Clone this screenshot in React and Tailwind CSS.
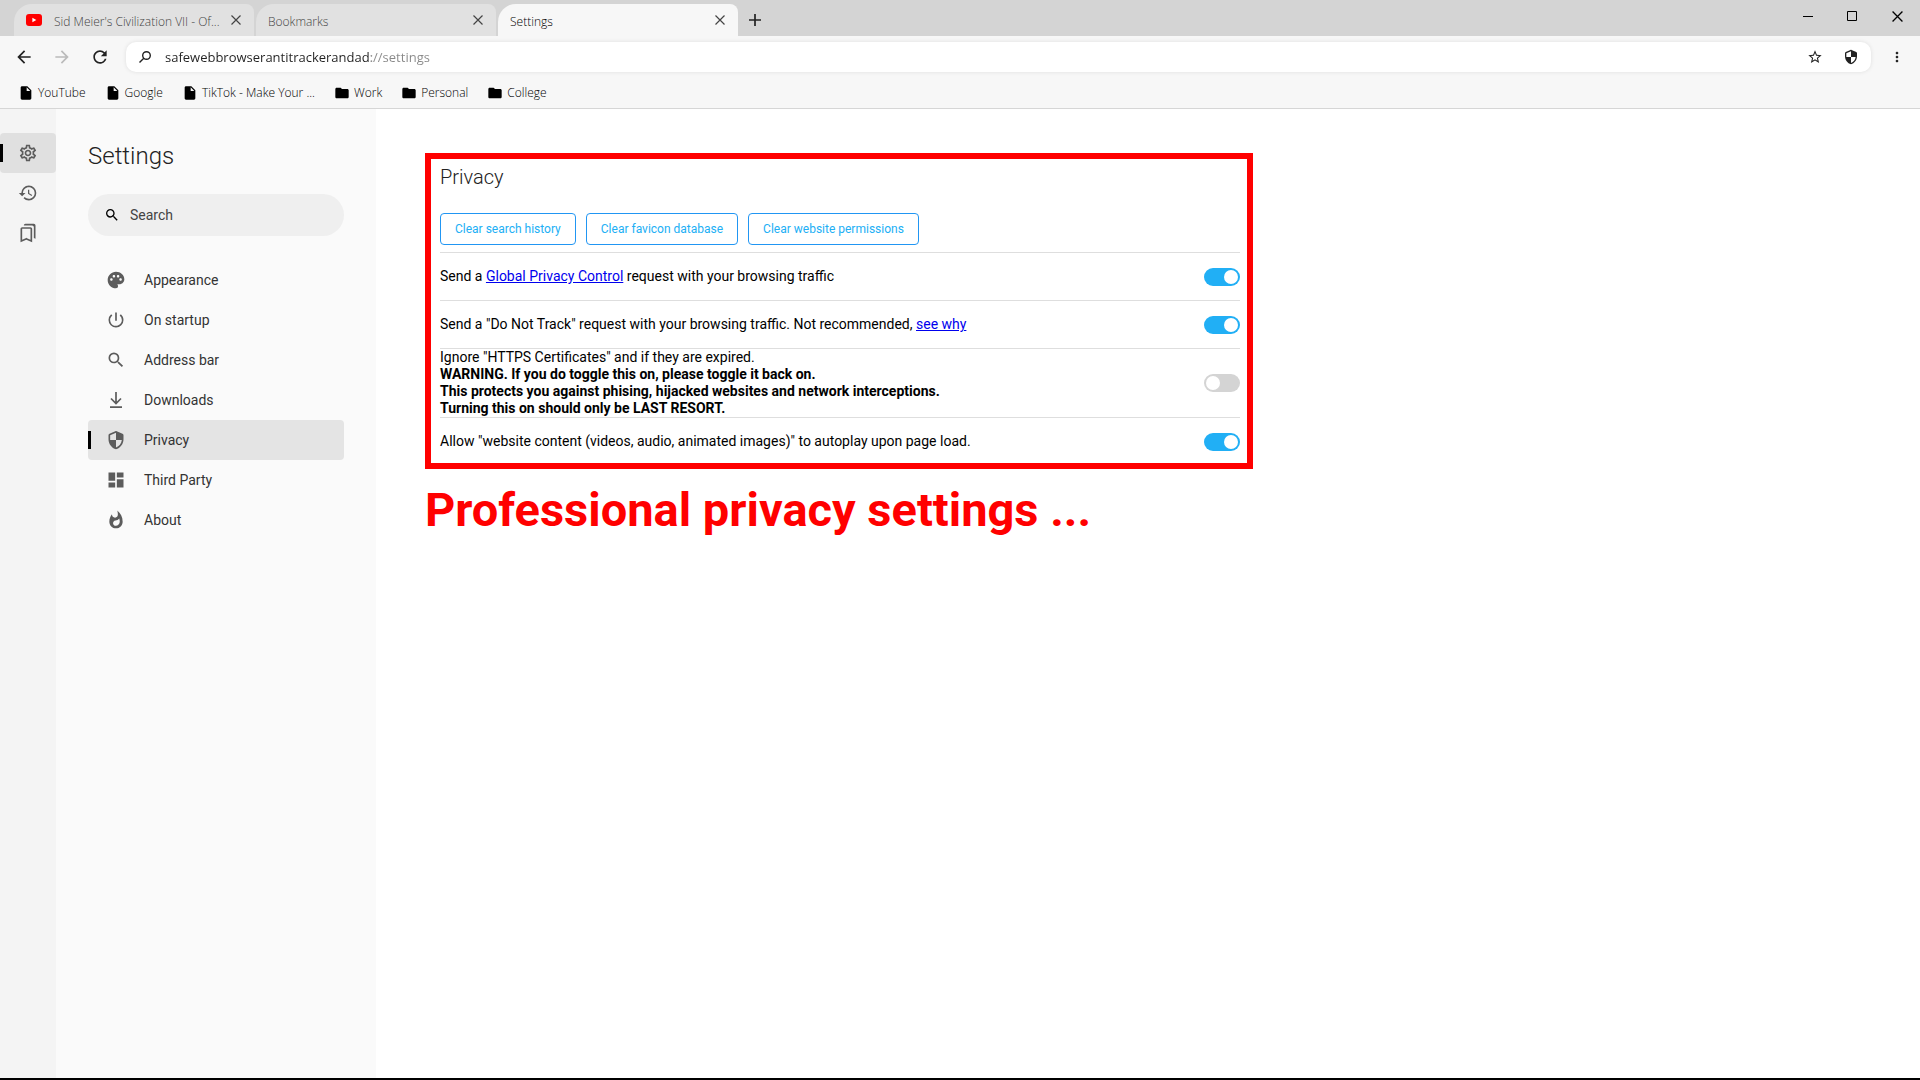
import React, { useState } from 'react';
import {
  MdArrowBack,
  MdArrowForward,
  MdDashboard,
  MdFolder,
  MdHistory,
  MdInsertDriveFile,
  MdMoreVert,
  MdOutlineBookmarks,
  MdOutlineSettings,
  MdPalette,
  MdPowerSettingsNew,
  MdRefresh,
  MdSearch,
  MdStarBorder,
  MdWhatshot,
} from 'react-icons/md';

const YouTubeIcon = () => (
  <svg viewBox="0 0 16 12" className="h-3 w-4 shrink-0">
    <rect width="16" height="12" rx="3" fill="#ff0000" />
    <path d="M6.4 3.8v4.4L10.3 6z" fill="#fff" />
  </svg>
);

const CloseIcon = ({ className }) => (
  <svg viewBox="0 0 10 10" className={className} fill="none" stroke="currentColor" strokeWidth="1.2">
    <path d="M.5.5l9 9M9.5.5l-9 9" />
  </svg>
);

const MagnifierIcon = ({ className }) => (
  <svg viewBox="0 0 12 12" className={className} fill="none" stroke="currentColor" strokeWidth="1.4">
    <circle cx="7.5" cy="4.5" r="3.8" />
    <path d="M4.8 7.2L.5 11.4" />
  </svg>
);

const ShieldIcon = ({ className }) => (
  <svg viewBox="0 0 24 24" className={className} fill="currentColor">
    <path d="M11.19 1.36l-7 3.11C3.47 4.79 3 5.51 3 6.3V11c0 5.55 3.84 10.74 9 12 5.16-1.26 9-6.45 9-12V6.3c0-.79-.47-1.51-1.19-1.83l-7-3.11c-.51-.23-1.11-.23-1.62 0zM12 11.99h7c-.53 4.12-3.28 7.79-7 8.94V12H5V6.3l7-3.11v8.8z" />
  </svg>
);

const DownloadIcon = ({ className }) => (
  <svg viewBox="0 0 20 20" className={className} fill="none" stroke="currentColor" strokeWidth="1.7">
    <path d="M10 2v11.5M5 8.5l5 5 5-5M4 17.2h12" />
  </svg>
);

const TABS = [
  { title: "Sid Meier's Civilization VII - Of...", icon: YouTubeIcon },
  { title: 'Bookmarks' },
  { title: 'Settings', active: true },
];

const BOOKMARKS = [
  { title: 'YouTube', icon: MdInsertDriveFile },
  { title: 'Google', icon: MdInsertDriveFile },
  { title: 'TikTok - Make Your ...', icon: MdInsertDriveFile },
  { title: 'Work', icon: MdFolder },
  { title: 'Personal', icon: MdFolder },
  { title: 'College', icon: MdFolder },
];

const RAIL = [
  { title: 'Settings', icon: MdOutlineSettings, active: true },
  { title: 'History', icon: MdHistory },
  { title: 'Bookmarks', icon: MdOutlineBookmarks },
];

const SECTIONS = [
  { title: 'Appearance', icon: MdPalette },
  { title: 'On startup', icon: MdPowerSettingsNew },
  { title: 'Address bar', icon: MdSearch },
  { title: 'Downloads', icon: DownloadIcon },
  { title: 'Privacy', icon: ShieldIcon },
  { title: 'Third Party', icon: MdDashboard },
  { title: 'About', icon: MdWhatshot },
];

function TabStrip() {
  return (
    <div className="flex h-9 items-end bg-[#d4d4d4] pl-[14px]">
      <div className="flex gap-[2px]">
        {TABS.map(({ title, icon: Icon, active }) => (
          <div
            key={title}
            className={`flex h-8 w-60 items-center rounded-tl-[18px] rounded-tr-[8px] pr-[13px] pl-3 text-[12px] font-light ${
              active ? 'bg-[#f7f7f7] text-black' : 'bg-[#e1e1e1] text-[#444]'
            }`}
          >
            {Icon && (
              <span className="mr-3">
                <Icon />
              </span>
            )}
            <button className="min-w-0 flex-1 pt-[3px] text-left whitespace-nowrap">{title}</button>
            <button aria-label={`Close ${title}`} className="text-[#444]">
              <CloseIcon className="h-[10px] w-[10px]" />
            </button>
          </div>
        ))}
      </div>
      <button aria-label="New tab" className="ml-[11px] flex h-8 items-center">
        <svg viewBox="0 0 12 12" className="h-3 w-3" stroke="#222" strokeWidth="1.7">
          <path d="M6 0v12M0 6h12" />
        </svg>
      </button>
      <div className="ml-auto flex h-9 pb-1">
        <button aria-label="Minimize" className="flex w-[44px] items-center justify-center">
          <svg viewBox="0 0 10 10" className="h-[10px] w-[10px]">
            <path d="M0 5h10v1H0z" />
          </svg>
        </button>
        <button aria-label="Maximize" className="flex w-[44px] items-center justify-center">
          <svg viewBox="0 0 10 10" className="h-[10px] w-[10px]" fill="none" stroke="#000">
            <path d="M.5.5h9v9h-9z" />
          </svg>
        </button>
        <button aria-label="Close window" className="flex w-[46px] items-center justify-center">
          <CloseIcon className="h-[11px] w-[11px]" />
        </button>
      </div>
    </div>
  );
}

function Toolbar() {
  return (
    <div className="flex h-[42px] items-center pt-[6px] pb-[6px] pl-[14px] text-[#222]">
      <button aria-label="Back" className="mr-[18px]">
        <MdArrowBack className="h-5 w-5" />
      </button>
      <button aria-label="Forward" className="mr-[18px] text-[#bbb]">
        <MdArrowForward className="h-5 w-5" />
      </button>
      <button aria-label="Reload" className="mr-4">
        <MdRefresh className="h-5 w-5" />
      </button>
      <div className="flex h-[30px] flex-1 items-center rounded-[10px] bg-white pr-3 pl-[13px] shadow-[0_0_4px_rgba(0,0,0,0.1)]">
        <MagnifierIcon className="mr-[14px] h-3 w-3" />
        <input
          aria-label="Address"
          defaultValue="safewebbrowserantitrackerandad://settings"
          className="flex-1 bg-[linear-gradient(to_right,#222_206px,#888_206px)] bg-clip-text pt-px text-[13px] text-transparent outline-none"
        />
        <button aria-label="Add bookmark" className="mr-5">
          <MdStarBorder className="h-4 w-4" />
        </button>
        <button aria-label="Protection">
          <ShieldIcon className="h-4 w-4" />
        </button>
      </div>
      <button aria-label="Menu" className="mr-[15px] ml-[18px]">
        <MdMoreVert className="h-4 w-4" />
      </button>
    </div>
  );
}

function Toggle({ id, defaultChecked }) {
  const [checked, setChecked] = useState(defaultChecked);

  return (
    <input
      id={id}
      type="checkbox"
      checked={checked}
      onChange={(e) => setChecked(e.target.checked)}
      className="h-[18px] w-9 shrink-0 appearance-none rounded-full bg-[#d4d4d4] p-[2px] before:block before:h-[14px] before:w-[14px] before:rounded-full before:bg-white checked:bg-[#21aff5] checked:before:translate-x-[18px]"
    />
  );
}

function SettingRow({ id, defaultChecked, children }) {
  return (
    <div className="flex min-h-12 items-center justify-between border-t border-[#dedede] last:-mb-[2px]">
      <label htmlFor={id} className="text-[14px] leading-[17px] text-black">
        {children}
      </label>
      <Toggle id={id} defaultChecked={defaultChecked} />
    </div>
  );
}

function PrivacyPanel() {
  return (
    <section className="border-[6px] border-[#ff0000] pr-[7px] pl-[9px]">
      <h2 className="pt-1 text-[20px] leading-[28px] font-light text-[#222]">Privacy</h2>
      <div className="mt-[22px] mb-[7px] flex gap-[10px]">
        {['Clear search history', 'Clear favicon database', 'Clear website permissions'].map((label) => (
          <button
            key={label}
            className="h-8 rounded-[4px] border border-[#2196f3] px-[14px] text-[12px] text-[#21aff5]"
          >
            {label}
          </button>
        ))}
      </div>
      <SettingRow id="gpc" defaultChecked>
        Send a{' '}
        <a href="#gpc" className="text-[#0000ee] underline">
          Global Privacy Control
        </a>{' '}
        request with your browsing traffic
      </SettingRow>
      <SettingRow id="dnt" defaultChecked>
        Send a "Do Not Track" request with your browsing traffic. Not recommended,{' '}
        <a href="#dnt" className="text-[#0000ee] underline">
          see why
        </a>
      </SettingRow>
      <SettingRow id="https" defaultChecked={false}>
        Ignore "HTTPS Certificates" and if they are expired.
        <br />
        <b>
          WARNING. If you do toggle this on, please toggle it back on.
          <br />
          This protects you against phising, hijacked websites and network interceptions.
          <br />
          Turning this on should only be LAST RESORT.
        </b>
      </SettingRow>
      <SettingRow id="autoplay" defaultChecked>
        Allow "website content (videos, audio, animated images)" to autoplay upon page load.
      </SettingRow>
    </section>
  );
}

export default function App() {
  const [section, setSection] = useState('Privacy');

  return (
    <div className="flex min-h-screen flex-col border-b-2 border-black bg-white font-['Roboto',sans-serif]">
      <header className="border-b border-[#d6d6d6] bg-[#f7f7f7] font-['Open_Sans',sans-serif]">
        <TabStrip />
        <Toolbar />
        {/* Bookmarks bar */}
        <nav className="flex h-[30px] items-center gap-[19px] pl-[18px] text-[12px] font-light text-black">
          {BOOKMARKS.map(({ title, icon: Icon }) => (
            <a key={title} href="#bookmark" className="flex items-center gap-1">
              <Icon className="h-4 w-4" />
              {title}
            </a>
          ))}
        </nav>
      </header>

      <div className="flex flex-1">
        {/* Icon rail */}
        <nav className="w-14 shrink-0 bg-[#f4f4f4] pt-6">
          {RAIL.map(({ title, icon: Icon, active }) => (
            <button
              key={title}
              aria-label={title}
              className={`flex h-10 w-14 items-center rounded-[4px] text-[#5c5c5c] ${active ? 'bg-[#e0e0e0]' : ''}`}
            >
              <span className={`h-[18px] w-[3px] ${active ? 'bg-black' : ''}`} />
              <Icon className="ml-[15px] h-5 w-5" />
            </button>
          ))}
        </nav>

        {/* Settings sections */}
        <aside className="w-80 shrink-0 bg-[#fafafa] px-8 pt-8">
          <h1 className="text-[24px] leading-[30px] font-light text-[#222]">Settings</h1>
          <label className="mt-[23px] flex h-[42px] items-center rounded-full bg-[#efefef] pl-4">
            <MdSearch className="h-4 w-4 text-black" />
            <input
              aria-label="Search"
              placeholder="Search"
              className="ml-[10px] min-w-0 flex-1 text-[14px] outline-none placeholder:text-[#444]"
            />
          </label>
          <nav className="mt-6">
            {SECTIONS.map(({ title, icon: Icon }) => (
              <button
                key={title}
                onClick={() => setSection(title)}
                className={`flex h-10 w-full items-center rounded-[4px] text-left text-[14px] text-[#333] ${
                  section === title ? 'bg-[#e4e4e4]' : ''
                }`}
              >
                <span className={`h-[18px] w-[3px] ${section === title ? 'bg-black' : ''}`} />
                <Icon className="mr-[18px] ml-[15px] h-5 w-5 text-[#5c5c5c]" />
                {title}
              </button>
            ))}
          </nav>
        </aside>

        <main className="min-w-0 flex-1 pt-11 pl-[49px]">
          <div className="max-w-[828px]">
            <PrivacyPanel />
            <p className="mt-[13px] text-[47px] leading-[56px] font-bold text-[#ff0000]">
              Professional privacy settings ...
            </p>
          </div>
        </main>
      </div>
    </div>
  );
}
